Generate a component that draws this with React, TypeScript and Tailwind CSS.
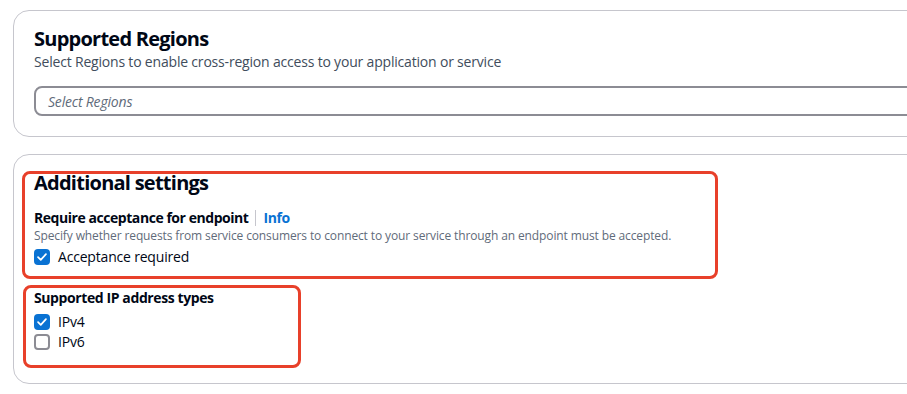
import React from "react";

const font = { fontFamily: '"Open Sans", "Noto Sans", Arial, sans-serif' };

const Check = ({ checked, label }: { checked: boolean; label: string }) => (
  <label className="flex h-[20px] items-center gap-[8px] text-[14px] leading-[20px] tracking-[-0.19px] text-[#000716]">
    {checked ? (
      <span className="flex h-[16px] w-[16px] items-center justify-center rounded-[4px] bg-[#0972d3]">
        <svg viewBox="0 0 16 16" className="h-[14px] w-[14px]" fill="none">
          <path d="M3.5 8.2 6.6 11.2 12.5 4.8" stroke="#fff" strokeWidth="2" strokeLinecap="round" strokeLinejoin="round" />
        </svg>
      </span>
    ) : (
      <span className="h-[16px] w-[16px] rounded-[4px] border-2 border-[#8c8c94] bg-white" />
    )}
    <span>{label}</span>
  </label>
);

export default function App() {
  return (
    <div className="w-screen overflow-hidden bg-white pb-[10px] pt-[10px]" style={font}>
      <div className="ml-[13px] w-[1000px] rounded-[16px] border border-[#c6c6cd] px-[20px] pb-[20px] pt-[16px]">
        <h2 className="text-[20px] font-bold leading-[24px] tracking-[-0.75px] text-[#000716]">Supported Regions</h2>
        <p className="mt-[1px] text-[14px] leading-[20px] tracking-[-0.19px] text-[#414d5c]">
          Select Regions to enable cross-region access to your application or service
        </p>
        <div className="mt-[14px] flex h-[30px] items-center rounded-[8px] border-2 border-[#8c8c94] pl-[12px]">
          <span className="text-[14px] italic tracking-[-0.19px] text-[#5f6b7a]">Select Regions</span>
        </div>
      </div>

      <div className="relative ml-[13px] mt-[17px] w-[1000px] rounded-[16px] border border-[#c6c6cd] px-[20px] pb-[31px] pt-[16px]">
        <h2 className="text-[20px] font-bold leading-[24px] tracking-[-0.75px] text-[#000716]">Additional settings</h2>
        <div className="mt-[13px] flex items-center text-[14px] leading-[20px] tracking-[-0.45px]">
          <span className="font-bold text-[#000716]">Require acceptance for endpoint</span>
          <span className="ml-[7px] mr-[7px] h-[16px] w-px bg-[#c6c6cd]" />
          <span className="font-bold text-[#0972d3]">Info</span>
        </div>
        <p className="text-[12px] leading-[16px] tracking-[-0.12px] text-[#5f6b7a]">
          Specify whether requests from service consumers to connect to your service through an endpoint must be accepted.
        </p>
        <div className="mt-[3px]">
          <Check checked label="Acceptance required" />
        </div>

        <div className="mt-[21px] text-[14px] font-bold leading-[20px] tracking-[-0.4px] text-[#000716]">Supported IP address types</div>
        <div className="mt-[4px] flex flex-col">
          <Check checked label="IPv4" />
          <Check checked={false} label="IPv6" />
        </div>

        <div className="pointer-events-none absolute left-[8px] top-[16px] h-[108px] w-[696px] rounded-[8px] border-[3px] border-[#e8402a]" />
        <div className="pointer-events-none absolute left-[9px] top-[130px] h-[83px] w-[278px] rounded-[8px] border-[3px] border-[#e8402a]" />
      </div>
    </div>
  );
}
